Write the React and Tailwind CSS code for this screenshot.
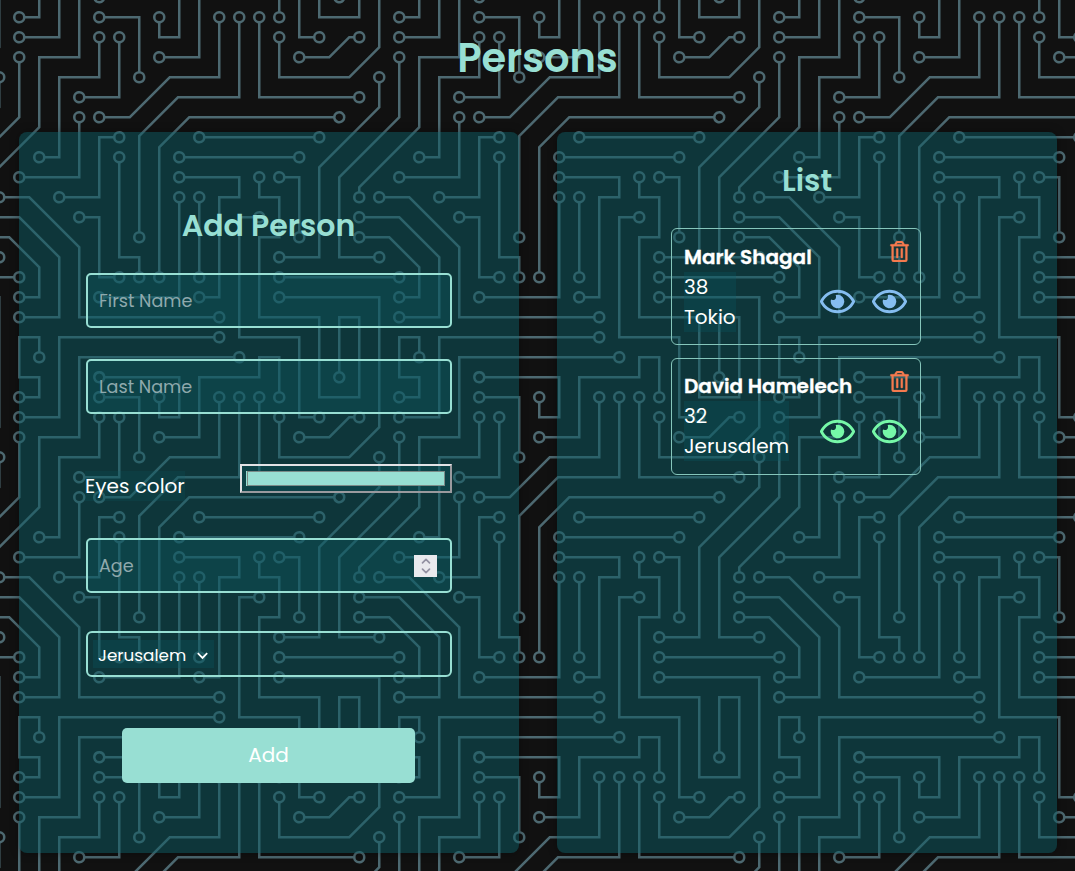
import { FaRegEye, FaRegTrashAlt } from "react-icons/fa";

const TRACES =
  "M44.1 224a5 5 0 1 1 0 2H0v-2h44.1zm160 48a5 5 0 1 1 0 2H82v-2h122.1zm57.8-46a5 5 0 1 1 0-2H304v2h-42.1zm0 16a5 5 0 1 1 0-2H304v2h-42.1zm6.2-114a5 5 0 1 1 0 2h-86.2a5 5 0 1 1 0-2h86.2zm-256-48a5 5 0 1 1 0 2H0v-2h12.1zm185.8 34a5 5 0 1 1 0-2h86.2a5 5 0 1 1 0 2h-86.2zM258 12.1a5 5 0 1 1-2 0V0h2v12.1zm-64 208a5 5 0 1 1-2 0v-54.2a5 5 0 1 1 2 0v54.2zm48-198.2V80h62v2h-64V21.9a5 5 0 1 1 2 0zm16 16V64h46v2h-48V37.9a5 5 0 1 1 2 0zm-128 96V208h16v12.1a5 5 0 1 1-2 0V210h-16v-76.1a5 5 0 1 1 2 0zm-5.9-21.9a5 5 0 1 1 0 2H114v48H85.9a5 5 0 1 1 0-2H112v-48h12.1zm-6.2 130a5 5 0 1 1 0-2H176v-74.1a5 5 0 1 1 2 0V242h-60.1zm-16-64a5 5 0 1 1 0-2H114v48h10.1a5 5 0 1 1 0 2H112v-48h-10.1zM66 284.1a5 5 0 1 1-2 0V274H50v30h-2v-32h18v12.1zM236.1 176a5 5 0 1 1 0 2H226v94h48v32h-2v-30h-48v-98h12.1zm25.8-30a5 5 0 1 1 0-2H274v44.1a5 5 0 1 1-2 0V146h-10.1zm-64 96a5 5 0 1 1 0-2H208v-80h16v-14h-42.1a5 5 0 1 1 0-2H226v18h-16v80h-12.1zm86.2-210a5 5 0 1 1 0 2H272V0h2v32h10.1zM98 101.9V146H53.9a5 5 0 1 1 0-2H96v-42.1a5 5 0 1 1 2 0zM53.9 34a5 5 0 1 1 0-2H80V0h2v34H53.9zm60.1 3.9V66H82v64H69.9a5 5 0 1 1 0-2H80V64h32V37.9a5 5 0 1 1 2 0zM101.9 82a5 5 0 1 1 0-2H128V37.9a5 5 0 1 1 2 0V82h-28.1zm16-64a5 5 0 1 1 0-2H146v44.1a5 5 0 1 1-2 0V18h-26.1zm102.2 270a5 5 0 1 1 0 2H98v14h-2v-16h124.1zM242 149.9V160h16v34h-16v62h48v48h-2v-46h-48v-66h16v-30h-16v-12.1a5 5 0 1 1 2 0zM53.9 18a5 5 0 1 1 0-2H64V2H48V0h18v18H53.9zm112 32a5 5 0 1 1 0-2H192V0h50v2h-48v48h-28.1zm-48-48a5 5 0 0 1-9.8-2h2.07a3 3 0 1 0 5.66 0H178v34h-18V21.9a5 5 0 1 1 2 0V32h14V2h-58.1zm0 96a5 5 0 1 1 0-2H137l32-32h39V21.9a5 5 0 1 1 2 0V66h-40.17l-32 32H117.9zm28.1 90.1a5 5 0 1 1-2 0v-76.51L175.59 80H224V21.9a5 5 0 1 1 2 0V82h-49.59L146 112.41v75.69zm16 32a5 5 0 1 1-2 0v-99.51L184.59 96H300.1a5 5 0 0 1 3.9-3.9v2.07a3 3 0 0 0 0 5.66v2.07a5 5 0 0 1-3.9-3.9H185.41L162 121.41v98.69zm-144-64a5 5 0 1 1-2 0v-3.51l48-48V48h32V0h2v50H66v55.41l-48 48v2.69zM50 53.9v43.51l-48 48V208h26.1a5 5 0 1 1 0 2H0v-65.41l48-48V53.9a5 5 0 1 1 2 0zm-16 16V89.41l-34 34v-2.82l32-32V69.9a5 5 0 1 1 2 0zM12.1 32a5 5 0 1 1 0 2H9.41L0 43.41V40.6L8.59 32h3.51zm265.8 18a5 5 0 1 1 0-2h18.69l7.41-7.41v2.82L297.41 50H277.9zm-16 160a5 5 0 1 1 0-2H288v-71.41l16-16v2.82l-14 14V210h-28.1zm-208 32a5 5 0 1 1 0-2H64v-22.59L40.59 194H21.9a5 5 0 1 1 0-2H41.41L66 216.59V242H53.9zm150.2 14a5 5 0 1 1 0 2H96v-56.6L56.6 162H37.9a5 5 0 1 1 0-2h19.5L98 200.6V256h106.1zm-150.2 2a5 5 0 1 1 0-2H80v-46.59L48.59 178H21.9a5 5 0 1 1 0-2H49.41L82 208.59V258H53.9zM34 39.8v1.61L9.41 66H0v-2h8.59L32 40.59V0h2v39.8zM2 300.1a5 5 0 0 1 3.9 3.9H3.83A3 3 0 0 0 0 302.17V256h18v48h-2v-46H2v42.1zM34 241v63h-2v-62H0v-2h34v1zM17 18H0v-2h16V0h2v18h-1zm273-2h14v2h-16V0h2v16zm-32 273v15h-2v-14h-14v14h-2v-16h18v1zM0 92.1A5.02 5.02 0 0 1 6 97a5 5 0 0 1-6 4.9v-2.07a3 3 0 1 0 0-5.66V92.1zM80 272h2v32h-2v-32zm37.9 32h-2.07a3 3 0 0 0-5.66 0h-2.07a5 5 0 0 1 9.8 0zM5.9 0A5.02 5.02 0 0 1 0 5.9V3.83A3 3 0 0 0 3.83 0H5.9zm294.2 0h2.07A3 3 0 0 0 304 3.83V5.9a5 5 0 0 1-3.9-5.9zm3.9 300.1v2.07a3 3 0 0 0-1.83 1.83h-2.07a5 5 0 0 1 3.9-3.9z";

const PADS = [
  [49, 225], [209, 273], [257, 225], [257, 241], [273, 129], [177, 129], [17, 81], [193, 113],
  [289, 113], [257, 17], [193, 225], [193, 161], [241, 17], [257, 33], [145, 225], [129, 129],
  [129, 113], [81, 161], [113, 241], [177, 161], [97, 177], [129, 225], [65, 289], [241, 177],
  [257, 145], [273, 193], [193, 241], [177, 145], [289, 33], [49, 145], [97, 97], [49, 33],
  [65, 129], [113, 33], [97, 81], [129, 33], [113, 17], [145, 65], [225, 289], [241, 145],
  [49, 17], [161, 49], [161, 17], [113, 97], [209, 17], [145, 193], [225, 17], [161, 225],
  [17, 161], [49, 49], [33, 209], [33, 65], [17, 33], [273, 49], [257, 209], [49, 241],
  [17, 193], [209, 257], [33, 161], [49, 257], [17, 177],
];

const HOLES = PADS.map(([x, y]) => `M${x - 3} ${y}a3 3 0 1 0 6 0a3 3 0 1 0-6 0z`).join("");

function CircuitBackground() {
  return (
    <svg className="absolute inset-0 h-full w-full" aria-hidden="true">
      <defs>
        <mask id="pads" maskUnits="userSpaceOnUse" x="0" y="0" width="304" height="304">
          <rect width="304" height="304" fill="white" />
          <path d={HOLES} fill="black" />
        </mask>
        <pattern
          id="circuit"
          width="304"
          height="304"
          patternUnits="userSpaceOnUse"
          patternTransform="translate(-42 -4) scale(1.25)"
        >
          <path d={TRACES} fill="#4d6971" mask="url(#pads)" />
        </pattern>
      </defs>
      <rect width="100%" height="100%" fill="url(#circuit)" />
    </svg>
  );
}

function TextField({ label, children }) {
  return (
    <div className="flex h-[55px] items-center justify-between rounded-[5px] border-2 border-[#98dfd3] bg-[#0b5b63]/35 pl-[11px] pr-[13px]">
      <span className="pt-px text-[17.6px] text-[#8fa9ad]">{label}</span>
      {children}
    </div>
  );
}

function Stepper() {
  return (
    <span className="flex h-[22px] w-[23px] items-center justify-center bg-[#e9e9ed]">
      <svg width="10" height="16" viewBox="0 0 10 16" fill="none" stroke="#9391a2" strokeWidth="1.7" strokeLinecap="round" strokeLinejoin="round">
        <path d="M1.5 4.8 5 1.3 8.5 4.8M1.5 11.2 5 14.7 8.5 11.2" />
      </svg>
    </span>
  );
}

function AddPerson() {
  return (
    <section className="flex h-[721px] w-[500px] flex-col rounded-lg bg-[#0b5b63]/50 px-[67px] pt-[74px] shadow-[0_0_10px_rgba(0,0,0,0.35)]">
      <h2 className="-ml-px text-center text-[30px] font-semibold leading-[40px] text-[#98dfd3]">Add Person</h2>
      <div className="mt-[27px]">
        <TextField label="First Name" />
      </div>
      <div className="mt-[31px]">
        <TextField label="Last Name" />
      </div>
      <div className="mt-[50px] flex h-[40px] items-start justify-between">
        <span className="-ml-px mt-[7px] whitespace-nowrap bg-[#0b5b63]/20 text-[20px] leading-[30px] text-white">Eyes color</span>
        <span className="block h-[29px] w-[212px] border-2 border-b-[#9a9a9e] border-l-[#e3e3e6] border-r-[#9a9a9e] border-t-[#e3e3e6] bg-[#0b5b63]/35 pl-1 pr-[5px] pt-[5px]">
          <span className="block h-[15px] bg-[#98dfd3] pl-px">
            <span className="block h-[15px] border border-[#7d8b88]" />
          </span>
        </span>
      </div>
      <div className="mt-[34px]">
        <TextField label="Age">
          <Stepper />
        </TextField>
      </div>
      <div className="mt-[38px] flex h-[46px] items-center rounded-[6px] border-2 border-[#98dfd3] pl-[5px]">
        <span className="flex h-[28px] w-[121px] items-center justify-between bg-[#0b5b63]/30 pl-[5px] pr-[6px] pt-[3px] text-[16.8px] text-white">
          Jerusalem
          <svg width="11" height="8" viewBox="0 0 11 8" fill="none" stroke="white" strokeWidth="1.8">
            <path d="M0.8 1.2 5.5 5.9 10.2 1.2" />
          </svg>
        </span>
      </div>
      <button className="ml-[36px] mt-[51px] h-[55px] w-[293px] rounded-[5px] bg-[#98dfd3] pb-px text-[20px] text-white">Add</button>
    </section>
  );
}

function PersonCard({ name, age, city, eyes, textOffset }) {
  return (
    <article className="flex h-[117px] w-[250px] justify-between rounded-[6px] border border-[#86c6bb] px-[12px] pt-[13px]">
      <div className={`w-[170px] text-[20px] leading-[30px] text-white ${textOffset}`}>
        <h3 className="whitespace-nowrap font-semibold [-webkit-text-stroke:0.3px_white]">{name}</h3>
        <div className="w-fit bg-[#0b5b63]/30">
          <p>{age}</p>
          <p>{city}</p>
        </div>
      </div>
      <div className="-ml-[40px] mr-px flex flex-col items-end">
        <FaRegTrashAlt className="-mt-[1px] mr-[-3px] h-[21px] w-[21px] text-[#f57a4f]" stroke="currentColor" strokeWidth="8" />
        <div className={`mt-[22px] flex gap-[17px] ${eyes}`}>
          <FaRegEye className="h-[35px] w-[35px]" />
          <FaRegEye className="h-[35px] w-[35px]" />
        </div>
      </div>
    </article>
  );
}

export default function App() {
  return (
    <main className="relative h-[871px] w-[1075px] overflow-hidden bg-[#111111] font-['Poppins','Inter',sans-serif]">
      <CircuitBackground />
      <div className="relative pt-[28px]">
        <h1 className="text-center text-[40px] font-semibold leading-[60px] text-[#98dfd3]">Persons</h1>
        <div className="mt-[44px] flex gap-[38px] pl-[19px]">
          <AddPerson />
          <section className="flex h-[721px] w-[500px] flex-col items-center rounded-lg bg-[#0b5b63]/50 pt-[29px] shadow-[0_0_10px_rgba(0,0,0,0.35)]">
            <h2 className="text-[30px] font-semibold leading-[40px] text-[#98dfd3]">List</h2>
            <div className="mr-[22px] mt-[27px] flex flex-col gap-[13px]">
              <PersonCard name="Mark Shagal" age="38" city="Tokio" eyes="text-[#85bdf0]" textOffset="mt-0" />
              <PersonCard name="David Hamelech" age="32" city="Jerusalem" eyes="text-[#76f8a8]" textOffset="-mt-px" />
            </div>
          </section>
        </div>
      </div>
    </main>
  );
}
